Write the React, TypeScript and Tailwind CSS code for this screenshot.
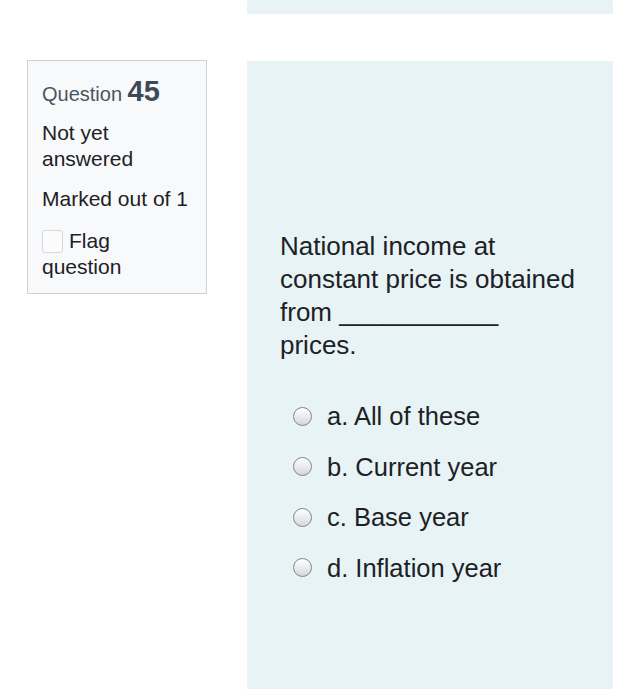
import React from "react";

const options = ["a. All of these", "b. Current year", "c. Base year", "d. Inflation year"];

function Radio() {
  return (
    <span className="inline-block w-[19px] h-[19px] rounded-full border border-[#80868b] bg-gradient-to-b from-[#ffffff] to-[#d5d8db] shrink-0" />
  );
}

export default function App() {
  return (
    <div
      className="w-[642px] h-[700px] bg-white overflow-hidden"
      style={{ fontFamily: '"Liberation Sans", Arial, sans-serif' }}
    >
      <div className="ml-[247px] w-[366px] h-[14px] bg-[#e7f3f5]" />
      <div className="flex items-start mt-[46px]">
        <div className="ml-[27px] w-[180px] border border-[#cfd1d3] bg-[#f8f9fa] px-[14px] pt-[13px] pb-[13px] text-[21px] leading-[26px] text-[#1d2125]">
          <div className="text-[20px] leading-[34px] text-[#4a5560]">
            Question <span className="font-bold text-[29px] text-[#3d4a55]">45</span>
          </div>
          <div className="mt-[9px]">Not yet answered</div>
          <div className="mt-[14px]">Marked out of 1</div>
          <div className="mt-[16px]">
            <span className="inline-block w-[21px] h-[23px] align-[-5px] mr-[6px] border border-[#d6d8da] rounded-[3px] bg-[#fbfbfb]" />
            Flag question
          </div>
        </div>
        <div className="ml-[40px] mt-[1px] w-[366px] h-[628px] bg-[#e7f3f5] pl-[33px] pr-[34px] pt-[169px] text-[#1d2125]">
          <div className="text-[26px] leading-[33px]">
            National income at constant price is obtained from ___________ prices.
          </div>
          <div className="mt-[29px] ml-[13px] flex flex-col">
            {options.map((o) => (
              <div key={o} className="h-[50.5px] flex items-center gap-[15px] text-[25.5px]">
                <Radio />
                <span>{o}</span>
              </div>
            ))}
          </div>
        </div>
      </div>
    </div>
  );
}
